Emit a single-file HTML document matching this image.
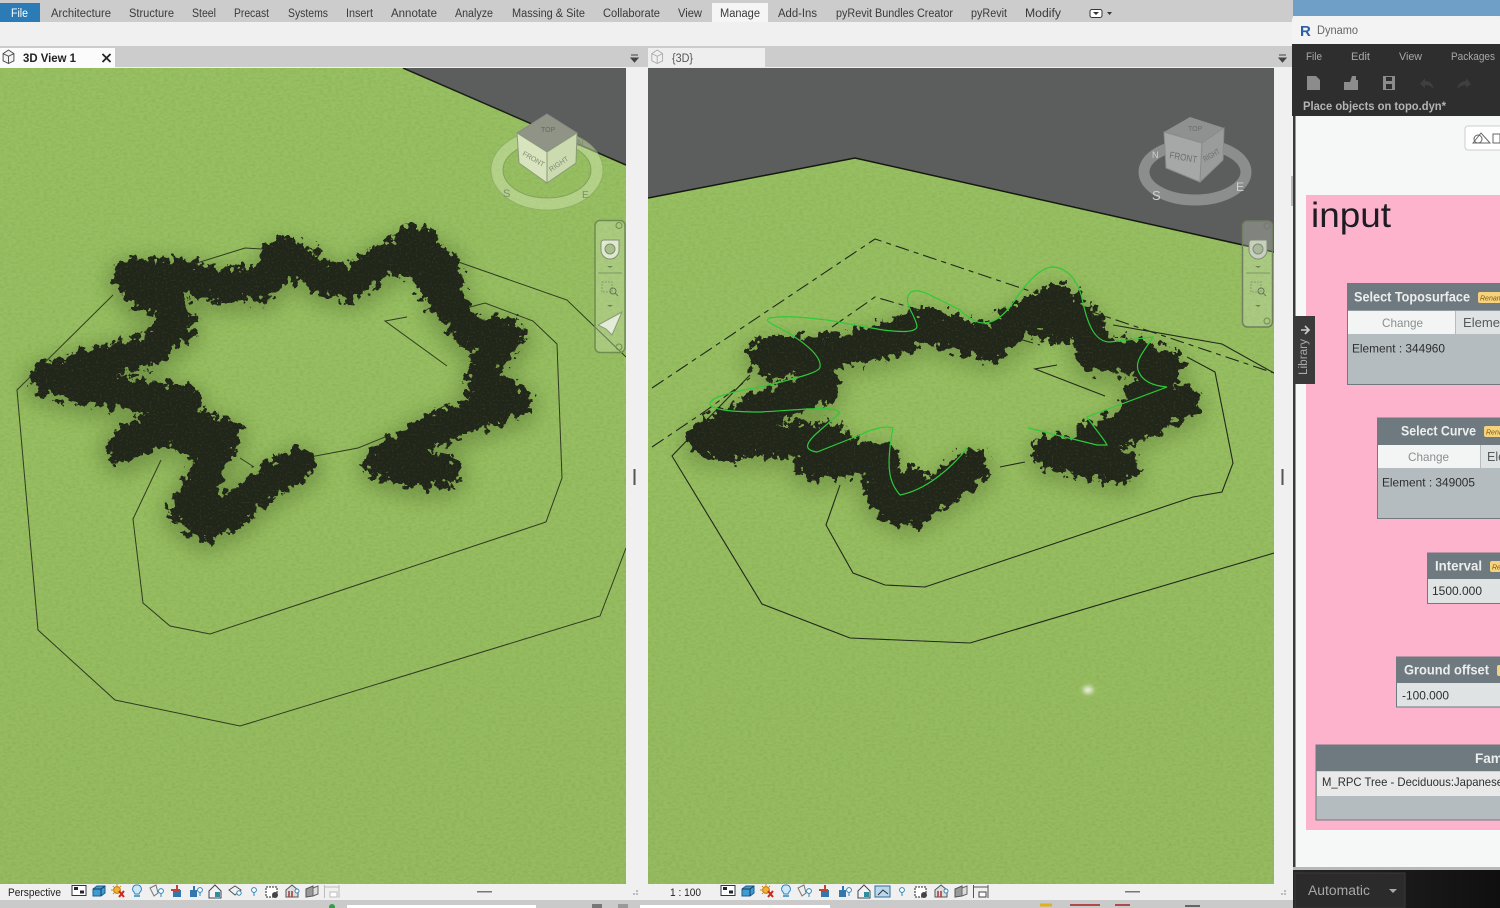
<!DOCTYPE html>
<html><head><meta charset="utf-8"><title>Revit Dynamo</title>
<style>
html,body{margin:0;padding:0;width:1500px;height:908px;overflow:hidden;background:#f0f0f0}
svg{display:block;font-family:"Liberation Sans",sans-serif}
</style></head><body>
<svg width="1500" height="908" viewBox="0 0 1500 908" xmlns="http://www.w3.org/2000/svg">
<defs>
<filter id="grass" x="0" y="0" width="100%" height="100%" color-interpolation-filters="sRGB">
<feTurbulence type="fractalNoise" baseFrequency="0.25 0.45" numOctaves="3" seed="4"/>
<feColorMatrix values="0 0 0 0 0.3 0 0 0 0 0.42 0 0 0 0 0.12 0.9 0 0 0 -0.33"/>
</filter>
<filter id="leaf" x="-15%" y="-15%" width="130%" height="130%" color-interpolation-filters="sRGB">
<feTurbulence type="fractalNoise" baseFrequency="0.13" numOctaves="3" seed="7" result="n"/>
<feDisplacementMap in="SourceGraphic" in2="n" scale="24" xChannelSelector="R" yChannelSelector="G" result="d"/>
<feTurbulence type="fractalNoise" baseFrequency="0.5" numOctaves="2" seed="11"/>
<feColorMatrix values="0 0 0 0 0.25 0 0 0 0 0.26 0 0 0 0 0.15 2.2 0 0 0 -1.2" result="s"/>
<feComposite in="s" in2="d" operator="in" result="sp"/>
<feMerge><feMergeNode in="d"/><feMergeNode in="sp"/></feMerge>
</filter>
<filter id="shade" x="-30%" y="-40%" width="160%" height="180%"><feGaussianBlur stdDeviation="9"/></filter>
<filter id="b1" x="-100%" y="-100%" width="300%" height="300%"><feGaussianBlur stdDeviation="2.5"/></filter>
<clipPath id="cl"><rect x="0" y="68" width="626" height="816"/></clipPath>
<clipPath id="cr"><rect x="648" y="68" width="626" height="816"/></clipPath>
<clipPath id="cd"><rect x="1293" y="16" width="207" height="892"/></clipPath>
<linearGradient id="gg" x1="0" y1="0" x2="0" y2="1"><stop offset="0" stop-color="#98c163"/><stop offset="1" stop-color="#96bb60"/></linearGradient>
<linearGradient id="blk" x1="0" y1="0" x2="1" y2="0"><stop offset="0" stop-color="#262626"/><stop offset="1" stop-color="#0f0f0f"/></linearGradient>

<g id="ic1"><rect x="0" y="0.5" width="14" height="10" fill="#fff" stroke="#334" stroke-width="1"/><rect x="2" y="2" width="4" height="3" fill="#223"/><rect x="8" y="5.5" width="4" height="3" fill="#223"/></g>
<g id="ic2"><path d="M1 4 L5 1 H13 V8 L9 11 H1Z" fill="#3f9bd0" stroke="#1e5f8e"/><path d="M1 4 H9 V11 M9 4 L13 1" fill="none" stroke="#123f60"/></g>
<g id="ic3"><circle cx="5" cy="5" r="3.4" fill="#f2b230" stroke="#c07a10"/><path d="M5 -1V1M-1 5H1M1 1L2 2M9 1L8 2M1 9L2 8" stroke="#d08a10"/><path d="M7 6L12 12M12 6L7 12" stroke="#c8281e" stroke-width="2"/></g>
<g id="ic4"><path d="M5 0A4 4 0 0 1 8 7L7 9H3L2 7A4 4 0 0 1 5 0Z" fill="#cfe8f7" stroke="#2f86b8"/><path d="M2 11H8" stroke="#2f86b8" stroke-width="1.5"/></g>
<g id="ic5"><path d="M0 3L6 0L8 8L4 11Z" fill="#eee" stroke="#777"/><circle cx="11" cy="6" r="2.4" fill="#fff" stroke="#2f86b8"/><path d="M11 8V12" stroke="#2f86b8"/></g>
<g id="ic6"><path d="M2 5H10V12H2Z" fill="#3477ad"/><path d="M6 0V6M0 5H9" stroke="#c8402e" stroke-width="2"/></g>
<g id="ic7"><path d="M1 5H8V12H1Z" fill="#3477ad"/><path d="M5 1V6" stroke="#3477ad" stroke-width="2"/><circle cx="11" cy="5" r="2.4" fill="#fff" stroke="#2f86b8"/><path d="M11 7V11" stroke="#2f86b8"/></g>
<g id="ic8"><path d="M0 6L6 0L12 6V13H0Z" fill="#f2f2f2" stroke="#445"/><rect x="6" y="7" width="5" height="5" fill="#2e8f9c"/></g>
<g id="ic9"><path d="M1 5L7 1L13 5L7 10Z" fill="none" stroke="#555"/><circle cx="11" cy="8" r="2.2" fill="#fff" stroke="#2f86b8"/></g>
<g id="ic9b"><rect x="0" y="1" width="15" height="11" fill="#bcd7ea" stroke="#2f6d99"/><path d="M3 10L8 5L13 9" fill="none" stroke="#234"/></g>
<g id="ic10"><circle cx="3" cy="3" r="2.4" fill="#fff" stroke="#2f86b8"/><path d="M3 5V9" stroke="#2f86b8"/></g>
<g id="ic11"><rect x="0" y="1" width="11" height="10" fill="#fff" stroke="#222" stroke-dasharray="2 1"/><circle cx="9" cy="9" r="3" fill="#444"/></g>
<g id="ic12"><path d="M0 5L6 0L12 5V12H0Z" fill="#ddd" stroke="#555"/><path d="M3 6V12M6 6V12" stroke="#a33" stroke-width="1.5"/><circle cx="11" cy="6" r="2" fill="#fff" stroke="#2f86b8"/></g>
<g id="ic13"><path d="M0 4L7 1V11L0 12Z" fill="#999" stroke="#555"/><path d="M7 3L12 1V9L7 11Z" fill="#ddd" stroke="#666"/></g>
<g id="ic14"><path d="M0.5 0V13M15 0V13M0 2H15" fill="none" stroke="#555"/><rect x="6" y="7" width="7" height="5" fill="#fff" stroke="#444"/></g>
<g id="ic14b"><path d="M0.5 0V13M15 0V13M0 2H15" fill="none" stroke="#bbb"/><rect x="6" y="7" width="7" height="5" fill="#fff" stroke="#bbb"/></g>
<g id="house"><path d="M1 4L7 0L13 4V12L7 15L1 12Z" fill="#f4f4f4" stroke="#444"/><path d="M1 4L7 7L13 4M7 7V15" fill="none" stroke="#444"/></g>

<path id="tl" d="M298 464L262 486L232 512L205 524L186 510L200 482L214 458L224 434L190 430L155 432L122 447M152 428L185 402L135 394L85 388L46 378L95 364L150 349L178 326L170 304L140 292L130 276L180 275L222 286L262 284L282 258L302 262L325 278L350 283L382 262L415 246L442 264L446 300L470 332L508 336L488 360L482 386L514 401L470 416L425 434L398 452L382 462L420 472L444 470"/>
<path id="tr" d="M972 467L940 490L908 508L882 495L882 460L850 457L812 462L830 440L770 440L706 438L760 410L822 386L812 358L765 354L830 352L895 338L922 324L960 335L990 343L1030 314L1056 300L1085 325L1095 355L1130 356L1166 366L1146 390L1132 420L1182 402L1130 426L1092 440L1088 456L1120 466L1050 452"/>
</defs>

<!-- base -->
<rect width="1500" height="908" fill="#f0f0f0"/>
<rect y="0" width="1293" height="22" fill="#cccccc"/>
<rect y="46" width="1293" height="21" fill="#cccccc"/>
<rect x="0" y="3" width="40" height="19" fill="#2a7bb6"/>
<rect x="712" y="3" width="56" height="19" fill="#f5f5f5"/>
<g font-size="11.5" fill="#3a3a3a">
<text x="11" y="17" fill="#fff" textLength="17" lengthAdjust="spacingAndGlyphs">File</text>
<text x="51" y="17" textLength="60" lengthAdjust="spacingAndGlyphs">Architecture</text>
<text x="129" y="17" textLength="45" lengthAdjust="spacingAndGlyphs">Structure</text>
<text x="192" y="17" textLength="24" lengthAdjust="spacingAndGlyphs">Steel</text>
<text x="234" y="17" textLength="35" lengthAdjust="spacingAndGlyphs">Precast</text>
<text x="288" y="17" textLength="40" lengthAdjust="spacingAndGlyphs">Systems</text>
<text x="346" y="17" textLength="27" lengthAdjust="spacingAndGlyphs">Insert</text>
<text x="391" y="17" textLength="46" lengthAdjust="spacingAndGlyphs">Annotate</text>
<text x="455" y="17" textLength="38" lengthAdjust="spacingAndGlyphs">Analyze</text>
<text x="512" y="17" textLength="73" lengthAdjust="spacingAndGlyphs">Massing &amp; Site</text>
<text x="603" y="17" textLength="57" lengthAdjust="spacingAndGlyphs">Collaborate</text>
<text x="678" y="17" textLength="24" lengthAdjust="spacingAndGlyphs">View</text>
<text x="720" y="17" textLength="40" lengthAdjust="spacingAndGlyphs">Manage</text>
<text x="778" y="17" textLength="39" lengthAdjust="spacingAndGlyphs">Add-Ins</text>
<text x="836" y="17" textLength="117" lengthAdjust="spacingAndGlyphs">pyRevit Bundles Creator</text>
<text x="971" y="17" textLength="36" lengthAdjust="spacingAndGlyphs">pyRevit</text>
<text x="1025" y="17" textLength="36" lengthAdjust="spacingAndGlyphs">Modify</text>
</g>
<rect x="1090" y="9.5" width="12" height="8" rx="2" fill="#fff" stroke="#333"/><path d="M1093 12H1099L1096 15Z" fill="#333"/><path d="M1107 12H1112L1109.500 15Z" fill="#333"/>

<!-- view tabs -->
<rect x="0" y="48" width="115" height="20" fill="#fbfbfb"/>
<rect x="648" y="48" width="117" height="20" fill="#eeeeee"/>
<use href="#house" x="2" y="50" transform="translate(0.4 5) scale(.9)"/>
<g opacity=".4"><use href="#house" x="651" y="50" transform="translate(65 5) scale(.9)"/></g>
<text x="23" y="62" font-size="11.500" font-weight="bold" fill="#222" textLength="53" lengthAdjust="spacingAndGlyphs">3D View 1</text>
<path d="M102.500 54L110.500 62M110.500 54L102.500 62" stroke="#222" stroke-width="1.800"/>
<text x="672" y="62" font-size="11.500" fill="#555" textLength="21" lengthAdjust="spacingAndGlyphs">{3D}</text>
<path d="M631 55H638M631 58H638L634.500 62Z" stroke="#444" fill="#444"/>
<path d="M1279 55H1286M1279 58H1286L1282.500 62Z" stroke="#444" fill="#444"/>

<!-- LEFT VIEW -->
<g clip-path="url(#cl)">
<rect x="0" y="68" width="626" height="816" fill="url(#gg)"/>
<rect x="0" y="68" width="626" height="816" filter="url(#grass)" opacity=".3"/>
<path d="M403 68L626 165V68Z" fill="#5c5e5e"/>
<path d="M403 68L626 165" stroke="#1c1f14" stroke-width="1.500" fill="none"/>
<g fill="none" stroke="#2f3b20" stroke-width="1">
<path d="M113 295L17 390L38 630L115 700L240 726L600 616L626 548"/>
<path d="M197 263L245 248L262 249"/>
<path d="M447 258L567 300L626 357"/>
<path d="M407 317L385 321L447 366"/>
<path d="M470 307L485 303L533 321L557 344L562 478L546 522L210 634L170 626L143 603L133 519L161 460"/>
<path d="M310 457L358 448L390 435M437 410L450 403"/>
<path d="M240 458L254 467"/>
</g>
<use href="#tl" fill="none" stroke="#3f5a22" stroke-width="48" stroke-linejoin="round" stroke-linecap="round" opacity=".35" filter="url(#shade)" transform="translate(0 5)"/>
<g filter="url(#leaf)"><use href="#tl" fill="none" stroke="#20261a" stroke-width="33" stroke-linejoin="round" stroke-linecap="round"/>
<circle cx="283" cy="260" r="24" fill="#20261a"/><circle cx="415" cy="252" r="27" fill="#20261a"/><circle cx="160" cy="282" r="18" fill="#20261a"/><circle cx="440" cy="285" r="24" fill="#20261a"/><circle cx="200" cy="435" r="26" fill="#20261a"/><circle cx="205" cy="508" r="24" fill="#20261a"/><circle cx="410" cy="462" r="24" fill="#20261a"/><circle cx="130" cy="440" r="18" fill="#20261a"/></g>
</g>

<!-- RIGHT VIEW -->
<g clip-path="url(#cr)">
<rect x="648" y="68" width="626" height="816" fill="url(#gg)"/>
<rect x="648" y="68" width="626" height="816" filter="url(#grass)" opacity=".3"/>
<path d="M648 198L855 158L1274 252V68H648Z" fill="#5c5e5e"/>
<path d="M648 198L855 158L1274 252" stroke="#15180f" stroke-width="1.500" fill="none"/>
<g fill="none" stroke="#20291a" stroke-width="1.100">
<path d="M652 447L707 410L750 378" stroke-dasharray="14 5 5 5"/>
<path d="M652 388L875 239L1274 373" stroke-dasharray="14 5 5 5"/>
<path d="M832 327L875 297L1040 345" stroke-dasharray="14 5 5 5"/>
<path d="M750 375L672 456L762 604L850 638L970 643L1274 553"/>
<path d="M1113 325L1222 344L1274 373"/>
<path d="M1187 357L1215 372L1233 463L1222 492L1193 497L925 587L885 585L853 573L826 525L840 485"/>
<path d="M1057 365L1035 369L1105 396"/>
<path d="M1000 467L1025 462"/>
</g>
<use href="#tr" fill="none" stroke="#3f5a22" stroke-width="48" stroke-linejoin="round" stroke-linecap="round" opacity=".3" filter="url(#shade)" transform="translate(0 6)"/>
<g filter="url(#leaf)"><use href="#tr" fill="none" stroke="#21261a" stroke-width="35" stroke-linejoin="round" stroke-linecap="round"/>
<circle cx="775" cy="358" r="22" fill="#21261a"/><circle cx="730" cy="440" r="23" fill="#21261a"/><circle cx="905" cy="498" r="30" fill="#21261a"/><circle cx="1060" cy="318" r="26" fill="#21261a"/><circle cx="1085" cy="455" r="24" fill="#21261a"/><circle cx="1150" cy="400" r="18" fill="#21261a"/><circle cx="840" cy="455" r="22" fill="#21261a"/></g>
<path d="M968 447C950 470 925 490 900 495C890 483 885 470 893 428C885 425 870 430 860 435L817 452C803 450 806 443 817 433L840 413C835 405 800 410 760 412C735 412 708 410 710 403C715 393 750 390 777 383C800 377 820 372 820 367C822 355 800 340 787 332C775 325 762 321 770 318C785 315 810 318 827 320L883 330C900 332 917 333 917 326C915 315 905 305 908 297C910 288 920 290 930 295L960 310C965 315 975 323 983 323C995 323 1005 315 1015 300C1025 285 1040 267 1053 267C1070 268 1080 285 1083 303C1088 325 1095 342 1110 342L1153 337C1145 350 1135 360 1138 370C1142 382 1155 386 1167 387L1087 417C1092 425 1105 440 1107 445L1097 445L1028 428" fill="none" stroke="#2fc93a" stroke-width="1.200"/>
<ellipse cx="1088" cy="690" rx="5" ry="3.500" fill="#f4f7ee" filter="url(#b1)"/>
</g>

<!-- viewcube left -->
<g>
<ellipse cx="547" cy="170" rx="50" ry="34" fill="none" stroke="#cfe3ad" stroke-opacity=".5" stroke-width="12"/>
<ellipse cx="547" cy="170" rx="56" ry="40" fill="none" stroke="#7f9c5c" stroke-opacity=".5" stroke-width="1"/>
<ellipse cx="547" cy="170" rx="44" ry="28" fill="none" stroke="#6f8c4e" stroke-opacity=".6" stroke-width="1"/>
<path d="M547 114L577 133L547 152L517 133Z" fill="#8f9486" stroke="#888" />
<path d="M517 133L547 152V183L519 163Z" fill="#d8e4bd" stroke="#8a9a78"/>
<path d="M577 133L547 152V183L576 163Z" fill="#ccdab0" stroke="#8a9a78"/>
<g font-size="7" fill="#7f8a72"><text x="522" y="155" transform="rotate(30 522 155)">FRONT</text><text x="551" y="172" transform="rotate(-34 551 172)">RIGHT</text><text x="541" y="132" fill="#666" font-size="7">TOP</text>
<text x="503" y="197" font-size="11">S</text><text x="582" y="198" font-size="10">E</text><text x="577" y="146" font-size="9">N</text></g>
<rect x="595" y="220.500" width="30" height="132" rx="5" fill="#cfe2b4" fill-opacity=".35" stroke="#6e8c50" stroke-width="1.500"/>
<circle cx="619" cy="225.500" r="3" fill="none" stroke="#6e8c50"/><circle cx="619" cy="347" r="3" fill="none" stroke="#6e8c50"/>
<path d="M601 243Q601 240 604 240H619V250A9 9 0 0 1 601 250Z" fill="#dfe9cf" stroke="#7f8f70"/><circle cx="610" cy="249" r="5" fill="#a9bf8a" stroke="#7f8f70"/>
<path d="M607 266H613L610 268Z M607 305H613L610 307Z" fill="#6c7f58"/><path d="M598 273H622" stroke="#7f9468"/>
<rect x="602" y="282" width="10" height="10" fill="none" stroke="#8a9a78" stroke-dasharray="2 1"/><circle cx="613" cy="291" r="3" fill="none" stroke="#667857"/><path d="M615 293L618 296" stroke="#667857"/>
<path d="M622 312L598 325L606 329L612 335Z" fill="#e2ecd6" stroke="#8a9a78"/>
</g>
<!-- viewcube right -->
<g>
<ellipse cx="1195" cy="172" rx="51" ry="28" fill="none" stroke="#9c9e9e" stroke-opacity=".75" stroke-width="11"/>
<path d="M1190 117L1224 128L1202 143L1164 132Z" fill="#8f9191"/>
<path d="M1164 132L1202 143L1200 182L1166 168Z" fill="#a6a8a8" stroke="#8a8a8a"/>
<path d="M1224 128L1202 143L1200 182L1223 160Z" fill="#9a9c9c" stroke="#8a8a8a"/>
<g fill="#6c6e6e" font-size="10"><text x="1169" y="158" font-size="9.500" textLength="28" lengthAdjust="spacingAndGlyphs" transform="rotate(10 1169 158)">FRONT</text><text x="1205" y="162" font-size="8" textLength="18" lengthAdjust="spacingAndGlyphs" transform="rotate(-30 1205 162)">RIGHT</text><text x="1188" y="131" font-size="7">TOP</text>
<text x="1152" y="200" font-size="13" fill="#d0d2d2">S</text><text x="1236" y="191" font-size="12" fill="#d0d2d2">E</text><text x="1152" y="158" font-size="9" fill="#d0d2d2">N</text></g>
<rect x="1242.500" y="221" width="30" height="106" rx="5" fill="#dfe6d4" fill-opacity=".28" stroke="#6f7f60" stroke-width="1.500"/>
<circle cx="1267" cy="226" r="3" fill="none" stroke="#777"/><circle cx="1267" cy="321" r="3" fill="none" stroke="#6e8c50"/>
<path d="M1249 243Q1249 240 1252 240H1267V250A9 9 0 0 1 1249 250Z" fill="#c9cfc0" stroke="#7f8f70"/><circle cx="1258" cy="249" r="5" fill="#a9b79a" stroke="#7f8f70"/>
<path d="M1255 266H1261L1258 268Z M1255 305H1261L1258 307Z" fill="#6c7f58"/><path d="M1246 273H1270" stroke="#7f9468"/>
<rect x="1251" y="282" width="10" height="10" fill="none" stroke="#8a9a78" stroke-dasharray="2 1"/><circle cx="1261" cy="291" r="3" fill="none" stroke="#667857"/><path d="M1263 293L1266 296" stroke="#667857"/>
</g>

<!-- splitters -->
<rect x="633.500" y="469" width="2" height="16" fill="#555"/>
<rect x="1281.500" y="469" width="2" height="16" fill="#555"/>

<!-- status bars -->
<rect x="0" y="884" width="1293" height="16" fill="#f0f0f0"/>
<rect x="0" y="900" width="1293" height="8" fill="#cacaca"/>
<rect x="347" y="905" width="189" height="3" fill="#fff"/>
<rect x="640" y="905" width="190" height="3" fill="#fff"/>
<rect x="592" y="904" width="10" height="4" fill="#777"/><rect x="618" y="904" width="10" height="4" fill="#999"/><circle cx="332" cy="907" r="3" fill="#3a9a4a"/>
<path d="M1040 905H1052" stroke="#e0b020" stroke-width="3"/><path d="M1070 905H1100M1115 905H1130" stroke="#b04a4a" stroke-width="2"/><path d="M1185 906H1200" stroke="#666" stroke-width="2"/>
<text x="8" y="896" font-size="11" fill="#222" textLength="53" lengthAdjust="spacingAndGlyphs">Perspective</text>
<text x="670" y="896" font-size="11" fill="#222" textLength="31" lengthAdjust="spacingAndGlyphs">1 : 100</text>
<use href="#ic1" x="72" y="885"/><use href="#ic2" x="92" y="885"/><use href="#ic3" x="112" y="885"/><use href="#ic4" x="132" y="885"/><use href="#ic5" x="150" y="885"/><use href="#ic6" x="171" y="885"/><use href="#ic7" x="189" y="885"/><use href="#ic8" x="209" y="885"/><use href="#ic9" x="228" y="885"/><use href="#ic10" x="251" y="887"/><use href="#ic11" x="266" y="886"/><use href="#ic12" x="286" y="885"/><use href="#ic13" x="306" y="885"/><use href="#ic14b" x="324" y="885"/>
<use href="#ic1" x="721" y="885"/><use href="#ic2" x="741" y="885"/><use href="#ic3" x="761" y="885"/><use href="#ic4" x="781" y="885"/><use href="#ic5" x="798" y="885"/><use href="#ic6" x="819" y="885"/><use href="#ic7" x="838" y="885"/><use href="#ic8" x="858" y="885"/><use href="#ic9b" x="875" y="885"/><use href="#ic10" x="899" y="887"/><use href="#ic11" x="915" y="886"/><use href="#ic12" x="935" y="885"/><use href="#ic13" x="955" y="885"/><use href="#ic14" x="973" y="885"/>
<rect x="477" y="891" width="15" height="1.500" fill="#777"/><rect x="1125" y="891" width="15" height="1.500" fill="#777"/>
<g fill="#bbb"><rect x="636" y="890" width="2" height="2"/><rect x="633" y="893" width="2" height="2"/><rect x="636" y="893" width="2" height="2"/><rect x="1284" y="890" width="2" height="2"/><rect x="1281" y="893" width="2" height="2"/><rect x="1284" y="893" width="2" height="2"/></g>

<!-- DYNAMO -->
<rect x="1293" y="0" width="207" height="16" fill="#6f9fc7"/>
<rect x="1291" y="176" width="2" height="30" fill="#bbb"/>
<rect x="1292" y="16" width="208" height="30" rx="4" fill="#f3f3f3"/>
<text x="1300" y="36" font-size="15" font-weight="bold" fill="#2b5fa5">R</text>
<text x="1317" y="34" font-size="11.500" fill="#666" textLength="41" lengthAdjust="spacingAndGlyphs">Dynamo</text>
<rect x="1292" y="44" width="208" height="72" fill="#2e2e2e"/>
<g font-size="11" fill="#a8a8a8"><text x="1306" y="60" textLength="16" lengthAdjust="spacingAndGlyphs">File</text><text x="1351" y="60" textLength="19" lengthAdjust="spacingAndGlyphs">Edit</text><text x="1399" y="60" textLength="23" lengthAdjust="spacingAndGlyphs">View</text><text x="1451" y="60" textLength="44" lengthAdjust="spacingAndGlyphs">Packages</text></g>
<path d="M1307 76H1316L1320 80V90H1307Z" fill="#8c8c8c"/>
<path d="M1344 82H1350L1352 76H1356V80H1358V90H1344Z" fill="#8c8c8c"/>
<path d="M1383 76H1395V90H1383Z M1386 77V81H1392V77Z M1386 84V89H1392V84Z" fill="#8c8c8c" fill-rule="evenodd"/>
<path d="M1420 84L1425 78V81Q1432 81 1434 89Q1430 85 1425 85V88Z" fill="#3f3f3f"/>
<path d="M1471 84L1466 78V81Q1459 81 1457 89Q1461 85 1466 85V88Z" fill="#3f3f3f"/>
<text x="1303" y="110" font-size="11.500" font-weight="bold" fill="#b4b4b4" textLength="143" lengthAdjust="spacingAndGlyphs">Place objects on topo.dyn*</text>

<rect x="1293" y="116" width="207" height="752" fill="#f6f8f8"/>
<rect x="1293" y="116" width="2.500" height="754" fill="#3a3a3a"/>
<rect x="1465" y="126" width="50" height="24" rx="3" fill="#fff" stroke="#ccc"/>
<path d="M1473 143L1481 133L1490 143Z M1493 134H1500V143H1493Z" fill="none" stroke="#666"/>
<circle cx="1478" cy="139" r="4" fill="none" stroke="#666"/>

<rect x="1306" y="195" width="194" height="635" fill="#fdb3cc"/>
<text x="1311" y="227" font-size="35" fill="#1c1c22" textLength="80" lengthAdjust="spacingAndGlyphs">input</text>

<g clip-path="url(#cd)">
<!-- Select Toposurface -->
<rect x="1347.500" y="283.500" width="180" height="101" fill="#b5bcbf" stroke="#70797d"/>
<rect x="1347.500" y="283.500" width="180" height="27" fill="#6f7a80"/>
<rect x="1348" y="311" width="107" height="23" fill="#f3f4f4"/><rect x="1456" y="311" width="60" height="23" fill="#dfe3e3"/>
<text x="1354" y="301.500" font-size="13.500" font-weight="bold" fill="#eceeee" textLength="116" lengthAdjust="spacingAndGlyphs">Select Toposurface</text>
<rect x="1478" y="292" width="30" height="11" rx="2" fill="#f7d27e"/><text x="1480" y="300.500" font-size="7" font-style="italic" fill="#7a5a10">Rename</text>
<text x="1382" y="327" font-size="12" fill="#8a8f90" textLength="41" lengthAdjust="spacingAndGlyphs">Change</text>
<text x="1463" y="327" font-size="12.500" fill="#555a5c" textLength="48" lengthAdjust="spacingAndGlyphs">Element</text>
<text x="1352" y="352.500" font-size="12" fill="#2c2f30" textLength="93" lengthAdjust="spacingAndGlyphs">Element : 344960</text>
<!-- Select Curve -->
<rect x="1377.500" y="418" width="180" height="100.500" fill="#b5bcbf" stroke="#70797d"/>
<rect x="1377.500" y="418" width="180" height="27" fill="#6f7a80"/>
<rect x="1378" y="445" width="102" height="23" fill="#f3f4f4"/><rect x="1481" y="445" width="40" height="23" fill="#dfe3e3"/>
<text x="1401" y="435.500" font-size="13.500" font-weight="bold" fill="#eceeee" textLength="75" lengthAdjust="spacingAndGlyphs">Select Curve</text>
<rect x="1484" y="426" width="30" height="11" rx="2" fill="#f7d27e"/><text x="1486" y="434.500" font-size="7" font-style="italic" fill="#7a5a10">Rename</text>
<text x="1408" y="461" font-size="12" fill="#8a8f90" textLength="41" lengthAdjust="spacingAndGlyphs">Change</text>
<text x="1487" y="461" font-size="12.500" fill="#555a5c">Element</text>
<text x="1382" y="486.500" font-size="12" fill="#2c2f30" textLength="93" lengthAdjust="spacingAndGlyphs">Element : 349005</text>
<!-- Interval -->
<rect x="1427.500" y="553" width="100" height="50.500" fill="#dfe3e3" stroke="#70797d"/>
<rect x="1427.500" y="553" width="100" height="26" fill="#6f7a80"/>
<text x="1435" y="570.500" font-size="13.500" font-weight="bold" fill="#eceeee" textLength="47" lengthAdjust="spacingAndGlyphs">Interval</text>
<rect x="1490" y="561" width="30" height="11" rx="2" fill="#f7d27e"/><text x="1492" y="569.500" font-size="7" font-style="italic" fill="#7a5a10">Rename</text>
<text x="1432" y="595" font-size="12" fill="#2c2f30" textLength="50" lengthAdjust="spacingAndGlyphs">1500.000</text>
<!-- Ground offset -->
<rect x="1396.500" y="657" width="130" height="50" fill="#dfe3e3" stroke="#70797d"/>
<rect x="1396.500" y="657" width="130" height="26" fill="#6f7a80"/>
<text x="1404" y="674.500" font-size="13.500" font-weight="bold" fill="#eceeee" textLength="85" lengthAdjust="spacingAndGlyphs">Ground offset</text>
<rect x="1497" y="665" width="30" height="11" rx="2" fill="#f7d27e"/>
<text x="1402" y="699.500" font-size="12" fill="#2c2f30" textLength="47" lengthAdjust="spacingAndGlyphs">-100.000</text>
<!-- Family -->
<rect x="1316" y="745" width="260" height="75" fill="#b5bcbf" stroke="#70797d"/>
<rect x="1316" y="745" width="260" height="26" fill="#6f7a80"/>
<rect x="1317" y="771.500" width="258" height="24.500" fill="#e9e9e9"/>
<text x="1475" y="763" font-size="13.500" font-weight="bold" fill="#eceeee">Family</text>
<text x="1322" y="786" font-size="12" fill="#2c2f30" textLength="215" lengthAdjust="spacingAndGlyphs">M_RPC Tree - Deciduous:Japanese Maple</text>
</g>

<!-- Library -->
<rect x="1295" y="316" width="20" height="68" fill="#3a3a3a"/>
<text transform="translate(1307 375) rotate(-90)" font-size="11.500" fill="#aaa" textLength="36" lengthAdjust="spacingAndGlyphs">Library</text>
<path d="M1301 330H1308M1305 326L1309 330L1305 334" stroke="#ccc" stroke-width="1.600" fill="none"/>

<!-- Dynamo bottom -->
<rect x="1293" y="867" width="207" height="3" fill="#b8b8b8"/>
<rect x="1293" y="870" width="207" height="38" fill="url(#blk)"/>
<rect x="1295" y="873" width="110" height="35" fill="#2b2b2b" stroke="#3a3a3a"/>
<text x="1308" y="895" font-size="13.500" fill="#a8a8a8" textLength="62" lengthAdjust="spacingAndGlyphs">Automatic</text>
<path d="M1389 889H1397L1393 893Z" fill="#a8a8a8"/>
</svg>
</body></html>
